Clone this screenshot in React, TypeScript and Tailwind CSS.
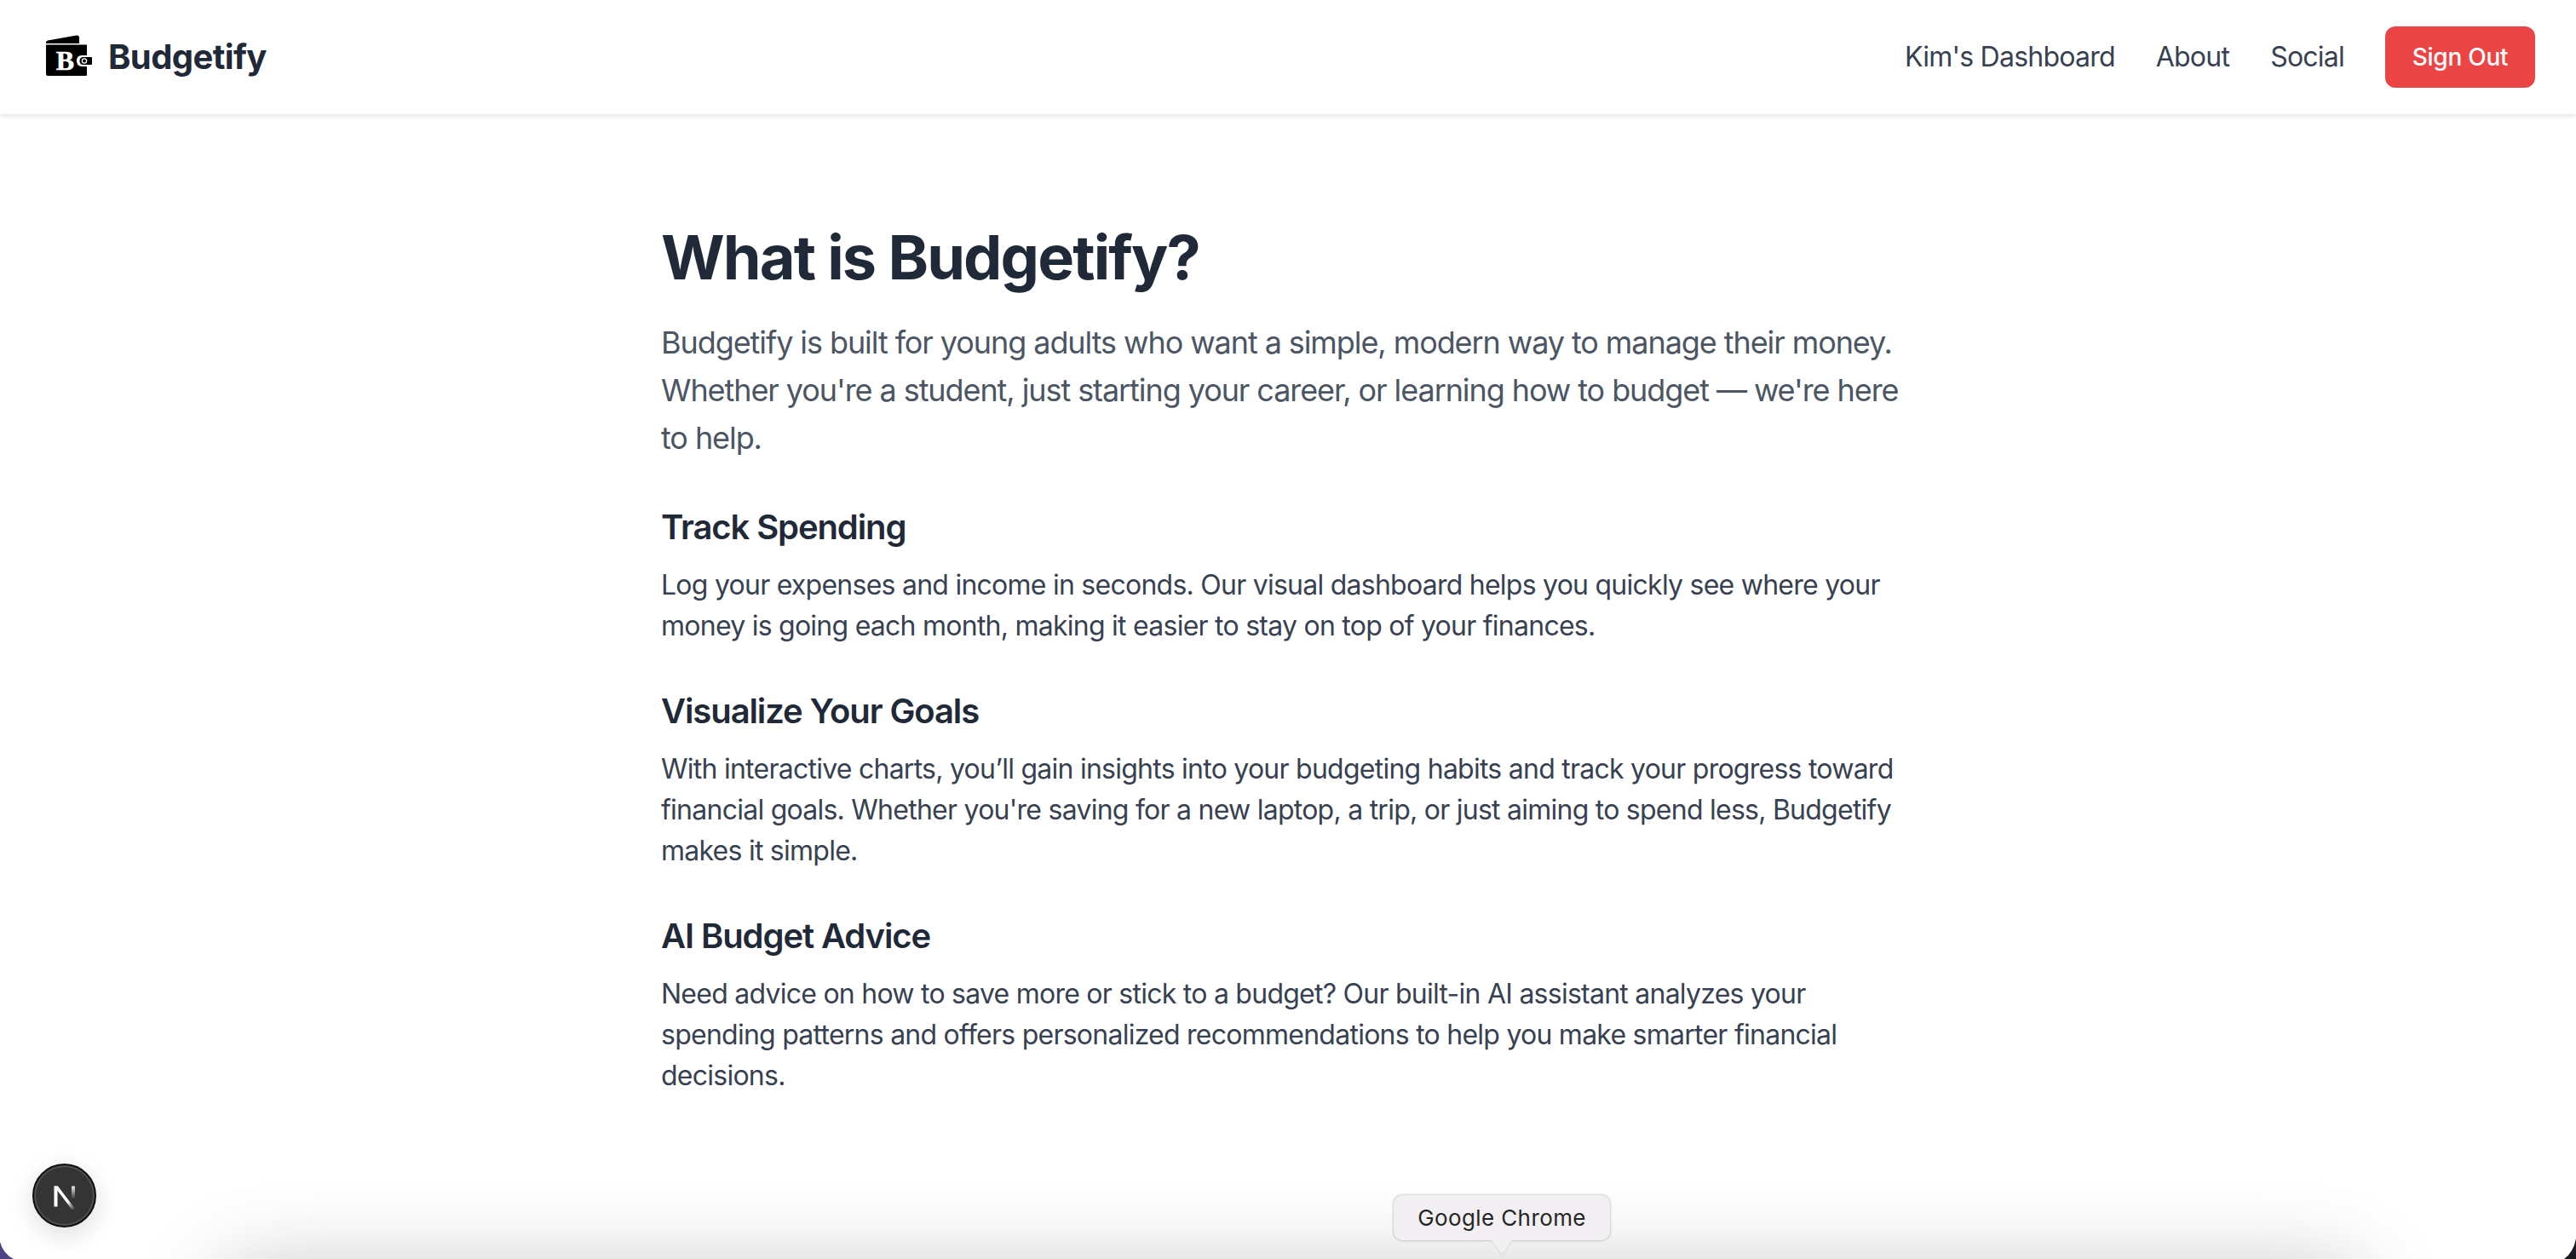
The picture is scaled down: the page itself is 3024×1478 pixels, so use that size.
const font = "font-['Inter','Liberation_Sans',sans-serif]";

function WalletLogo() {
  return (
    <svg width="54" height="48" viewBox="0 0 54 48" className="-mt-1 shrink-0">
      <path d="M0 9 Q0 7 2 6.500 L36 0.500 Q39 0 39 3 L39 10 L0 10 Z" fill="#000" />
      <path d="M0 11.500 L48 11.500 L48 24 L42 24 Q36 24 36 30.500 Q36 37 42 37 L48 37 L48 47 Q48 48 47 48 L2 48 Q0 48 0 46 Z" fill="#000" />
      <path d="M44 26 L53 26 Q54 26 54 27 L54 34 Q54 35 53 35 L44 35 Q39.500 35 39.500 30.500 Q39.500 26 44 26 Z" fill="#000" />
      <circle cx="45" cy="30.500" r="2.600" fill="none" stroke="#fff" strokeWidth="1.300" />
      <text x="22.500" y="41" textAnchor="middle" fontFamily="'Liberation Serif', serif" fontWeight="700" fontSize="32" stroke="#fff" strokeWidth="0.500" fill="#fff">B</text>
    </svg>
  );
}

function NextBadge() {
  return (
    <div className="absolute left-[38px] top-[1366px] w-[75px] h-[75px] rounded-full bg-[#343434] border-2 border-[#0f0f0f] shadow-[0_8px_30px_rgba(0,0,0,0.14),inset_0_0_0_2px_rgba(255,255,255,0.14)] flex items-center justify-center">
      <svg width="26" height="28" viewBox="0 0 26 28" className="mt-1">
        <defs>
          <linearGradient id="nfade1" x1="0" y1="0" x2="1" y2="1">
            <stop offset="0.65" stopColor="#fff" />
            <stop offset="1" stopColor="#fff" stopOpacity="0" />
          </linearGradient>
          <linearGradient id="nfade2" x1="0" y1="0" x2="0" y2="1">
            <stop offset="0" stopColor="#fff" stopOpacity="0.9" />
            <stop offset="0.75" stopColor="#fff" stopOpacity="0" />
          </linearGradient>
        </defs>
        <rect x="0.500" y="0.500" width="4" height="24" fill="#fff" />
        <path d="M0.500 0.500 L5 0.500 L25.500 27.500 L21 27.500 Z" fill="url(#nfade1)" />
        <rect x="21" y="0.500" width="4" height="20" fill="url(#nfade2)" />
      </svg>
    </div>
  );
}

function Tooltip() {
  return (
    <div className="absolute left-[1636px] top-[1403px] flex flex-col items-center">
      <div className={`w-[254px] h-[53px] rounded-[10px] bg-[#f1eff1] shadow-[0_0_3px_rgba(0,0,0,0.35)] flex items-center justify-center text-[26px] tracking-[0.4px] text-[#262626] ${font}`}>
        Google Chrome
      </div>
      <svg width="34" height="18" viewBox="0 0 34 18" className="-mt-px">
        <path d="M1 0 L33 0 Q30 1 28 3 L19 16 Q17 18 15 16 L6 3 Q4 1 1 0 Z" fill="#f1eff1" stroke="#cfcfcf" strokeWidth="0.700" />
        <rect x="0" y="0" width="34" height="1" fill="#f1eff1" />
      </svg>
    </div>
  );
}

function Section({ title, children }: { title: string; children: React.ReactNode }) {
  return (
    <section className="mt-12">
      <h2 className="pt-px text-[40px] leading-[56px] font-semibold tracking-[-1.1px] text-[#1f2937]">{title}</h2>
      <p className="mt-[16px] mb-[-1px] text-[32px] leading-[48px] tracking-[-0.75px] text-[#374151]">{children}</p>
    </section>
  );
}

export default function App() {
  return (
    <div className={`relative h-[1478px] w-full overflow-hidden bg-white ${font}`}>
      <header className="relative z-10 flex h-[134px] items-center justify-between bg-white pl-[54px] pr-[48px] shadow-[0_2px_6px_rgba(0,0,0,0.12)]">
        <div className="flex items-center gap-[19px]">
          <WalletLogo />
          <span className="text-[40px] font-bold tracking-[-0.6px] text-[#1f2937]">Budgetify</span>
        </div>
        <nav className="flex items-center gap-12 text-[32px] tracking-[-0.77px] text-[#374151]">
          <a>Kim's Dashboard</a>
          <a>About</a>
          <a>Social</a>
          <button className="h-[72px] w-[176px] rounded-xl bg-[#ea4444] text-[28px] font-medium tracking-[-0.25px] text-white">Sign Out</button>
        </nav>
      </header>

      <main className="mx-auto w-[1536px] px-8 pt-[128px]">
        <h1 className="text-[72px] leading-[80px] font-bold tracking-[-1.9px] text-[#1f2937]">What is Budgetify?</h1>
        <p className="mt-8 text-[36px] leading-[56px] tracking-[-1.08px] text-[#4b5563]">
          Budgetify is built for young adults who want a simple, modern way to manage their money. Whether you're a student, just starting your career, or learning how to budget — we're here to help.
        </p>
        <Section title="Track Spending">
          Log your expenses and income in seconds. Our visual dashboard helps you quickly see where your money is going each month, making it easier to stay on top of your finances.
        </Section>
        <Section title="Visualize Your Goals">
          With interactive charts, you’ll gain insights into your budgeting habits and track your progress toward financial goals. Whether you're saving for a new laptop, a trip, or just aiming to spend less, Budgetify makes it simple.
        </Section>
        <Section title="AI Budget Advice">
          Need advice on how to save more or stick to a budget? Our built-in AI assistant analyzes your spending patterns and offers personalized recommendations to help you make smarter financial decisions.
        </Section>
      </main>

      <div className="absolute left-[255px] top-[1486px] h-[120px] w-[2520px] rounded-[40px] shadow-[0_0_100px_rgba(0,0,0,0.22)]" />
      <NextBadge />
      <Tooltip />
      <svg width="18" height="20" viewBox="0 0 18 20" className="absolute bottom-0 left-0">
        <path d="M0 0 L0 20 L16 20 Q4 14 0 0 Z" fill="#4f4385" />
      </svg>
      <svg width="14" height="24" viewBox="0 0 14 24" className="absolute bottom-0 right-0">
        <path d="M14 0 L14 24 L0 24 Q11 16 14 0 Z" fill="#1c1c22" />
      </svg>
    </div>
  );
}
